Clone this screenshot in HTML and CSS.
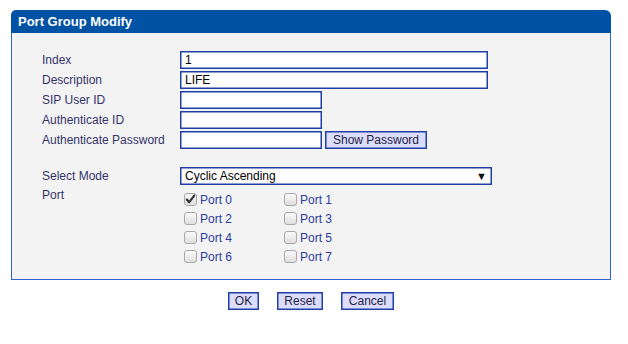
FILE: index.html
```html
<!DOCTYPE html>
<html>
<head>
<meta charset="utf-8">
<link rel="stylesheet" href="styles.css">
</head>
<body>
<div class="panel">
  <div class="head">Port Group Modify</div>
  <div class="body">
    <div class="form">
      <label class="lbl">Index</label>
      <div class="field"><input class="txt wide" type="text" value="1"></div>
      <label class="lbl">Description</label>
      <div class="field"><input class="txt wide" type="text" value="LIFE"></div>
      <label class="lbl">SIP User ID</label>
      <div class="field"><input class="txt short" type="text" value=""></div>
      <label class="lbl">Authenticate ID</label>
      <div class="field"><input class="txt short" type="text" value=""></div>
      <label class="lbl">Authenticate Password</label>
      <div class="field"><input class="txt short" type="password" value=""><button class="btn show">Show Password</button></div>
      <div class="spacer"></div>
      <label class="lbl">Select Mode</label>
      <div class="field"><div class="select"><span>Cyclic Ascending</span><span class="arrow">&#9660;</span></div></div>
      <label class="lbl port-lbl">Port</label>
      <div class="ports">
        <label class="chk"><span class="box checked"><svg viewBox="0 0 13 13" width="13" height="13"><path d="M2.8 6.6 L5.2 9.2 L10.2 2.6" fill="none" stroke="#333" stroke-width="2.2" stroke-linecap="round" stroke-linejoin="round"/></svg></span>Port 0</label>
        <label class="chk"><span class="box"></span>Port 1</label>
        <label class="chk"><span class="box"></span>Port 2</label>
        <label class="chk"><span class="box"></span>Port 3</label>
        <label class="chk"><span class="box"></span>Port 4</label>
        <label class="chk"><span class="box"></span>Port 5</label>
        <label class="chk"><span class="box"></span>Port 6</label>
        <label class="chk"><span class="box"></span>Port 7</label>
      </div>
    </div>
  </div>
</div>
<div class="actions">
  <button class="btn ok">OK</button>
  <button class="btn reset">Reset</button>
  <button class="btn cancel">Cancel</button>
</div>
</body>
</html>
```

FILE: styles.css
```css
html, body {
  margin: 0;
  padding: 0;
  background: #ffffff;
  font-family: "Liberation Sans", Arial, sans-serif;
  font-size: 12px;
}

.panel {
  width: 600px;
  margin: 10px 0 0 11px;
}

.head {
  height: 23px;
  line-height: 23px;
  background: #0052a4;
  color: #ffffff;
  font-weight: bold;
  font-size: 13px;
  padding-left: 7px;
  border-radius: 5px 6px 0 0;
}

.body {
  background: #f3f3f3;
  border: 1px solid #2e65d0;
  border-top: none;
  height: 247px;
  box-sizing: border-box;
  padding: 18px 0 0 30px;
}

.form {
  display: grid;
  grid-template-columns: 138px auto;
  grid-auto-rows: auto;
  row-gap: 2px;
}

.lbl {
  color: #33336a;
  height: 18px;
  line-height: 18px;
}

.field {
  display: flex;
  align-items: center;
  gap: 3px;
  height: 18px;
}

.txt {
  box-sizing: border-box;
  height: 18px;
  border: 1px solid #1f3fa8;
  box-shadow: inset 0 0 0 0.5px #1f3fa8;
  background: #ffffff;
  padding: 0 4px;
  margin: 0;
  font-family: "Liberation Sans", Arial, sans-serif;
  font-size: 12px;
  color: #000000;
  outline: none;
}

.wide { width: 308px; }
.short { width: 142px; }

.btn {
  box-sizing: border-box;
  height: 18px;
  margin: 0;
  padding: 0;
  background: #dcdcfd;
  border: 1px solid #1f3fa8;
  box-shadow: inset 0 0 0 0.5px #1f3fa8;
  font-family: "Liberation Sans", Arial, sans-serif;
  font-size: 12px;
  color: #222244;
  line-height: 16px;
}

.show { width: 102px; }

.spacer {
  grid-column: 1 / span 2;
  height: 14px;
}

.select {
  box-sizing: border-box;
  width: 312px;
  height: 18px;
  border: 1px solid #1f3fa8;
  box-shadow: inset 0 0 0 0.5px #1f3fa8;
  background: #ffffff;
  display: flex;
  justify-content: space-between;
  align-items: center;
  padding: 0 4px 0 4px;
  color: #000000;
}

.arrow {
  font-size: 11px;
  color: #111;
}

.port-lbl {
  line-height: 16px;
}

.ports {
  display: grid;
  grid-template-columns: 100px 100px;
  grid-auto-rows: 19px;
  padding-top: 5px;
  padding-left: 4px;
}

.chk {
  display: flex;
  align-items: center;
  gap: 3px;
  color: #2c3b9e;
  height: 15px;
}

.box {
  box-sizing: border-box;
  width: 13px;
  height: 13px;
  border: 1px solid #a8a8a8;
  border-radius: 3px;
  background: linear-gradient(#fbfbfb, #dedede);
  display: inline-block;
  flex: none;
}

.box svg {
  display: block;
  margin: -1px;
}

.actions {
  display: flex;
  justify-content: flex-start;
  gap: 18px;
  padding: 12px 0 0 228px;
}

.ok { width: 31px; }
.reset { width: 46px; }
.cancel { width: 53px; }
```
